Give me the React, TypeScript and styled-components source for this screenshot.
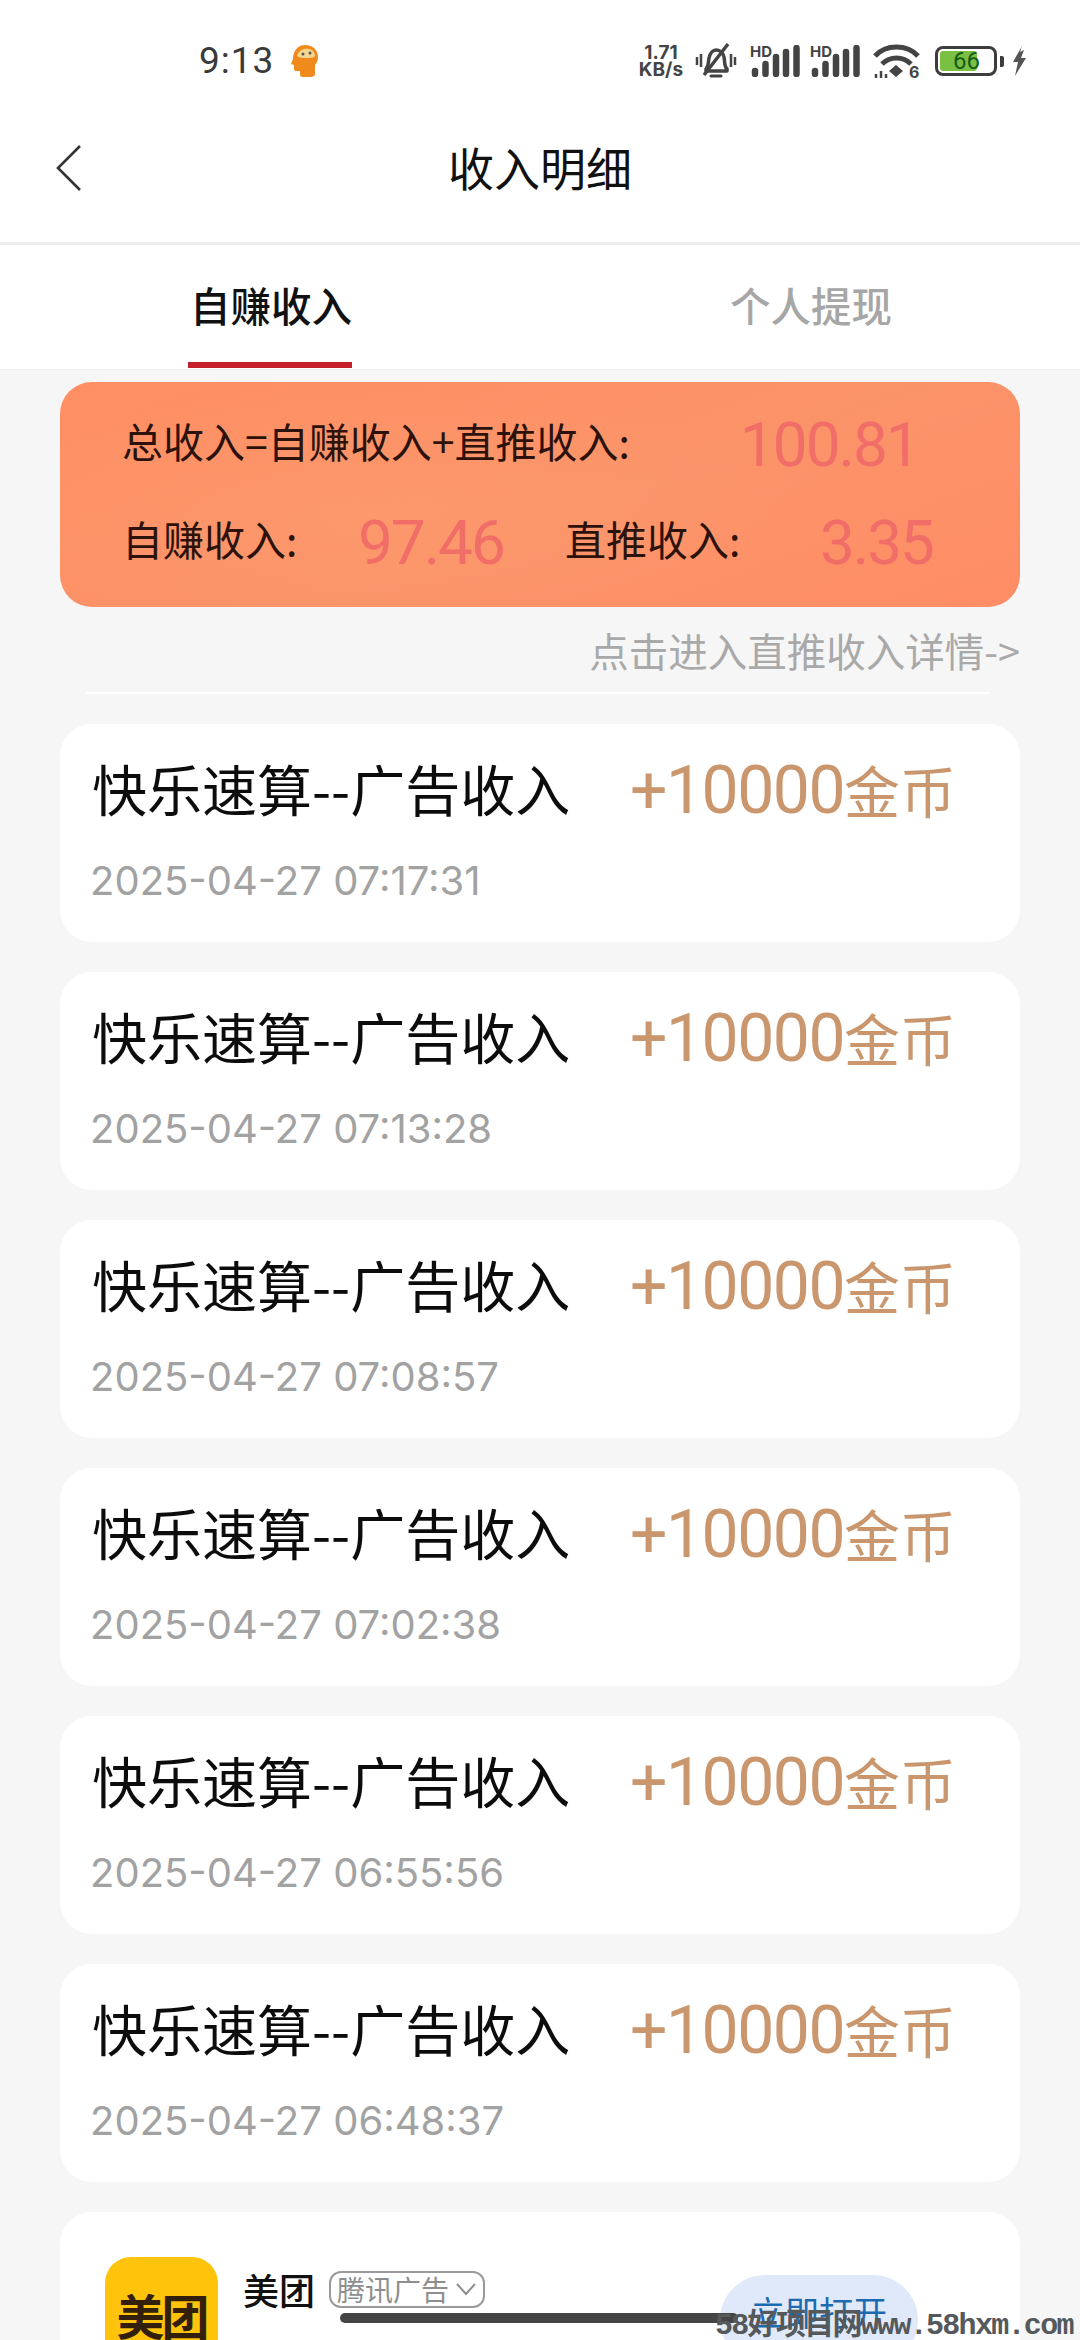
import React from "react";
import styled, { createGlobalStyle } from "styled-components";

const Global = createGlobalStyle`
  html, body { margin: 0; padding: 0; background: #f6f6f6; }
  body { font-family: "Noto Sans CJK SC", "Noto Sans", sans-serif; }
  * { box-sizing: border-box; }
`;

const Page = styled.div`
  position: relative;
  width: 1080px;
  height: 2340px;
  overflow: hidden;
  background: #f6f6f6;
`;

const StatusBar = styled.div`
  height: 122px;
  background: #fff;
  display: flex;
  align-items: center;
  padding: 0 52px 0 199px;
  justify-content: space-between;
`;

const StatusLeft = styled.div`
  display: flex;
  align-items: center;
  gap: 16px;
`;

const Clock = styled.span`
  font-family: Roboto, sans-serif;
  font-size: 37px;
  line-height: 44px;
  color: #3a3a3a;
  letter-spacing: 1px;
`;

const StatusRight = styled.div`
  display: flex;
  align-items: center;
`;

const Speed = styled.div`
  font-family: Inter, Roboto, sans-serif;
  font-weight: 700;
  font-size: 19px;
  line-height: 17px;
  color: #444;
  text-align: center;
  width: 50px;
  margin-right: 8px;
  white-space: nowrap;
`;

const SignalWrap = styled.div<{ $gap: number }>`
  position: relative;
  width: 50px;
  height: 32px;
  margin-left: ${(p) => p.$gap}px;
`;

const HdLabel = styled.span`
  position: absolute;
  left: 0;
  top: -1px;
  font-family: Inter, Roboto, sans-serif;
  font-weight: 700;
  font-size: 15px;
  line-height: 15px;
  color: #444;
`;

const SignalSvg = styled.svg`
  position: absolute;
  left: 0;
  top: 0;
`;

const Battery = styled.div`
  position: relative;
  width: 62px;
  height: 30px;
  border: 3px solid #3d3d3d;
  border-radius: 8px;
  margin-left: 15px;
  padding: 2px;
`;

const BatteryFill = styled.div`
  width: 72%;
  height: 100%;
  background: #7ac143;
  border-radius: 3px;
`;

const BatteryText = styled.span`
  position: absolute;
  left: 15px;
  top: -1px;
  font-family: Roboto, sans-serif;
  font-size: 24px;
  line-height: 26px;
  color: #165c16;
`;

const BatteryCap = styled.div`
  width: 4px;
  height: 11px;
  background: #3d3d3d;
  border-radius: 0 2px 2px 0;
  margin-left: 3px;
`;

const Header = styled.header`
  position: relative;
  height: 123px;
  background: #fff;
  display: flex;
  align-items: flex-start;
  justify-content: center;
  padding-top: 14px;
  border-bottom: 3px solid #ececec;
`;

const BackIcon = styled.svg`
  position: absolute;
  left: 55px;
  top: 22px;
`;

const Title = styled.h1`
  margin: 0;
  font-size: 46px;
  font-weight: 400;
  line-height: 60px;
  color: #111;
`;

const Tabs = styled.nav`
  height: 125px;
  background: #fff;
  display: grid;
  grid-template-columns: 540px 540px;
  padding-bottom: 1px;
  border-bottom: 1px solid #f0f0f0;
`;

const Tab = styled.div<{ $active?: boolean }>`
  position: relative;
  display: flex;
  padding: 33px 0 0 190px;
  font-size: 40.5px;
  line-height: 54px;
  font-weight: 500;
  color: ${(p) => (p.$active ? "#111" : "#a6a6a6")};
`;

const TabLine = styled.span`
  position: absolute;
  left: 188px;
  bottom: 0;
  width: 164px;
  height: 6px;
  background: #c4202b;
`;

const Content = styled.main`
  padding: 12px 60px 0;
  display: flex;
  flex-direction: column;
`;

const Summary = styled.section`
  height: 225px;
  border-radius: 32px;
  background:
    radial-gradient(ellipse 460px 120px at 300px 130px, rgba(255, 168, 120, 0.28), transparent),
    linear-gradient(160deg, #ff8e63 0%, #fb9369 55%, #ff8d66 100%);
  padding: 26px 62px 0;
  display: flex;
  flex-direction: column;
  gap: 24px;
`;

const SummaryRow = styled.div`
  display: flex;
  align-items: center;
  height: 74px;
`;

const SummaryLabel = styled.span<{ $w: number }>`
  width: ${(p) => p.$w}px;
  flex: none;
  font-size: 41px;
  line-height: 48px;
  margin-bottom: 10px;
  color: #2c120a;
  white-space: nowrap;
`;

const SummaryValue = styled.span<{ $w: number }>`
  width: ${(p) => p.$w}px;
  flex: none;
  font-family: Roboto, sans-serif;
  font-size: 62px;
  line-height: 70px;
  letter-spacing: -2px;
  color: #f16d68;
`;

const DetailLink = styled.div`
  margin-top: 20px;
  text-align: right;
  font-size: 39.5px;
  line-height: 46px;
  color: #a9a9a9;
  white-space: nowrap;
`;

const Divider = styled.div`
  height: 2px;
  margin: 19px 30px 30px 26px;
  background: #fff;
`;

const List = styled.div`
  display: flex;
  flex-direction: column;
  gap: 30px;
`;

const Card = styled.article`
  height: 218px;
  border-radius: 32px;
  background: #fff;
  padding: 28px 32px 0;
`;

const CardTop = styled.div`
  display: flex;
  justify-content: space-between;
  align-items: center;
  height: 70px;
  padding-right: 32px;
`;

const CardTitle = styled.span`
  font-size: 55px;
  line-height: 64px;
  color: #0c0c0c;
  white-space: nowrap;
`;

const Amount = styled.span`
  display: flex;
  align-items: baseline;
  color: #c9966e;
  white-space: nowrap;
  transform: translateY(3px);
`;

const AmountNum = styled.span`
  font-family: Roboto, sans-serif;
  font-size: 66px;
  line-height: 66px;
  letter-spacing: -1.5px;
`;

const AmountUnit = styled.span`
  font-size: 56px;
  line-height: 66px;
`;

const CardDate = styled.div`
  margin-top: 35px;
  font-family: Inter, sans-serif;
  font-size: 40px;
  line-height: 48px;
  color: #a2a2a2;
  margin-left: -2px;
  white-space: nowrap;
`;

const AdCard = styled.article`
  margin-top: 30px;
  height: 220px;
  border-radius: 32px 32px 0 0;
  background: #fff;
  padding: 45px 45px 0;
  display: flex;
`;

const AdLogo = styled.div`
  width: 113px;
  height: 113px;
  flex: none;
  border-radius: 26px;
  background: #ffc30b;
  display: flex;
  justify-content: center;
  padding-top: 27px;
  font-size: 48px;
  line-height: 60px;
  font-weight: 700;
  color: #33200c;
  letter-spacing: -3px;
`;

const AdInfo = styled.div`
  margin-left: 25px;
  width: 375px;
  flex: none;
  display: flex;
  align-items: center;
  align-self: flex-start;
  gap: 14px;
  padding-top: 10px;
`;

const AdName = styled.span`
  font-size: 36px;
  line-height: 44px;
  color: #111;
  font-weight: 500;
`;

const AdTag = styled.span`
  display: flex;
  align-items: center;
  gap: 6px;
  height: 37px;
  padding: 0 6px;
  border: 2px solid #9a9a9a;
  border-radius: 12px;
  font-size: 28px;
  color: #8e8e8e;
  white-space: nowrap;
`;

const AdButton = styled.button`
  margin: 18px 0 0 102px;
  width: 198px;
  height: 90px;
  flex: none;
  border: 0;
  border-radius: 45px;
  background: #dfe9fa;
  color: #1c6bb0;
  font: 400 34px/64px "Noto Sans CJK SC", sans-serif;
  padding: 0 0 16px;
  white-space: nowrap;
`;

const HomeBar = styled.div`
  position: absolute;
  left: 340px;
  top: 2313px;
  width: 398px;
  height: 10px;
  border-radius: 5px;
  background: #454545;
`;

const Watermark = styled.div`
  position: absolute;
  right: 0;
  bottom: -2px;
  width: 365px;
  font-family: "Liberation Mono", "Noto Sans CJK SC", monospace;
  font-size: 30px;
  line-height: 32px;
  letter-spacing: -1.7px;
  font-weight: 700;
  color: #55595c;
  white-space: nowrap;
`;

const times = ["07:17:31", "07:13:28", "07:08:57", "07:02:38", "06:55:56", "06:48:37"];

const Signal = ({ gap }: { gap: number }) => (
  <SignalWrap $gap={gap}>
    <HdLabel>HD</HdLabel>
    <SignalSvg width="50" height="32" viewBox="0 0 50 32">
      <path d="M5 26v3M15.500 19v10M26 12v17M36 7v22M46.500 3v26" stroke="#444" strokeWidth="6.500" strokeLinecap="round" />
    </SignalSvg>
  </SignalWrap>
);

export default function App() {
  return (
    <Page>
      <Global />
      <StatusBar>
        <StatusLeft>
          <Clock>9:13</Clock>
          <svg width="30" height="36" viewBox="0 0 30 36">
            <path d="M15 2c8 0 13 5 13 12 0 3-1 6-3 8v9c0 2-2 3-4 3h-8c-2 0-3-1-3-3v-3H6c-2 0-2-2-2-3v-3l-3-1 2-5C3 8 8 2 15 2z" fill="#f18a1d" />
            <path d="M7 13c2-6 7-8 12-7 4 1 6 4 6 7-2 2-5 2-8 2-4 0-7 0-10-2z" fill="#f3d68f" />
            <circle cx="13" cy="11" r="1.500" fill="#555" />
            <circle cx="20" cy="10" r="1.500" fill="#555" />
          </svg>
        </StatusLeft>
        <StatusRight>
          <Speed>
            1.71
            <br />
            KB/s
          </Speed>
          <svg width="44" height="38" viewBox="0 0 44 38" fill="none">
            <path d="M12 27c3-3 2-6 3-11 1-5 4-8 7-8s7 2 8 7c1 5 0 9 3 12v2H12z" stroke="#444" strokeWidth="3.500" strokeLinejoin="round" />
            <path d="M17 34h10" stroke="#444" strokeWidth="3" strokeLinecap="round" />
            <path d="M10 33 34 2" stroke="#444" strokeWidth="3.500" />
            <path d="M3 15v8M7 12v13M37 12v13M41 15v8" stroke="#444" strokeWidth="2.500" />
          </svg>
          <Signal gap={12} />
          <Signal gap={10} />
          <svg width="47" height="36" viewBox="0 0 47 36" fill="none" style={{ marginLeft: 13 }}>
            <path d="M2 13C13 1 34 1 45 13" stroke="#444" strokeWidth="5" />
            <path d="M9 21c8-8 21-8 29 0" stroke="#444" strokeWidth="5" />
            <path d="M23 22l7 6-7 6-7-6z" fill="#444" />
            <path d="M3 31v4M8 28v7M13 31v4" stroke="#444" strokeWidth="2.500" />
            <text x="36" y="35" fontSize="16" fontWeight="700" fontFamily="Inter, sans-serif" fill="#444">6</text>
          </svg>
          <Battery>
            <BatteryFill />
            <BatteryText>66</BatteryText>
          </Battery>
          <BatteryCap />
          <svg width="18" height="32" viewBox="0 0 18 32" style={{ marginLeft: 6 }}>
            <path d="M12 1 3 17h5l-3 14 11-18h-5l3-8-4 2z" fill="#555" />
          </svg>
        </StatusRight>
      </StatusBar>
      <Header>
        <BackIcon width="28" height="48" viewBox="0 0 28 48" fill="none">
          <path d="M25 2 3 24l22 22" stroke="#333" strokeWidth="2.600" />
        </BackIcon>
        <Title>收入明细</Title>
      </Header>
      <Tabs>
        <Tab $active>
          自赚收入
          <TabLine />
        </Tab>
        <Tab>个人提现</Tab>
      </Tabs>
      <Content>
        <Summary>
          <SummaryRow>
            <SummaryLabel $w={618}>总收入=自赚收入+直推收入:</SummaryLabel>
            <SummaryValue $w={180}>100.81</SummaryValue>
          </SummaryRow>
          <SummaryRow>
            <SummaryLabel $w={236}>自赚收入:</SummaryLabel>
            <SummaryValue $w={207}>97.46</SummaryValue>
            <SummaryLabel $w={255}>直推收入:</SummaryLabel>
            <SummaryValue $w={120}>3.35</SummaryValue>
          </SummaryRow>
        </Summary>
        <DetailLink>点击进入直推收入详情-&gt;</DetailLink>
        <Divider />
        <List>
          {times.map((t) => (
            <Card key={t}>
              <CardTop>
                <CardTitle>快乐速算--广告收入</CardTitle>
                <Amount>
                  <AmountNum>+10000</AmountNum>
                  <AmountUnit>金币</AmountUnit>
                </Amount>
              </CardTop>
              <CardDate>2025-04-27 {t}</CardDate>
            </Card>
          ))}
        </List>
        <AdCard>
          <AdLogo>美团</AdLogo>
          <AdInfo>
            <AdName>美团</AdName>
            <AdTag>
              腾讯广告
              <svg width="22" height="14" viewBox="0 0 22 14" fill="none">
                <path d="M2 2l9 10 9-10" stroke="#8e8e8e" strokeWidth="2" />
              </svg>
            </AdTag>
          </AdInfo>
          <AdButton>立即打开</AdButton>
        </AdCard>
      </Content>
      <HomeBar />
      <Watermark>58好项目网www.58hxm.com</Watermark>
    </Page>
  );
}
